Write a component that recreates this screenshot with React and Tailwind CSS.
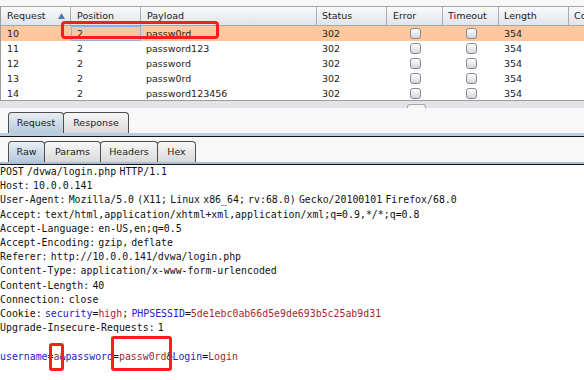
import React from "react";

const rows = [
  { req: "10", pos: "2", payload: "passw0rd", sel: true },
  { req: "11", pos: "2", payload: "password123" },
  { req: "12", pos: "2", payload: "password" },
  { req: "13", pos: "2", payload: "passw0rd" },
  { req: "14", pos: "2", payload: "password123456" },
];

const cols = "grid grid-cols-[70px_70px_176px_70px_56px_56px_70px_1fr]";

const Check = () => (
  <div className="w-[11px] h-[11px] rounded-[3px] border border-[#858990] bg-linear-to-b from-white to-[#d3d6dc]" />
);

const Tab = ({ label, active, w }) => (
  <div
    className={
      "h-[21px] flex items-center justify-center rounded-t-[4px] border border-b-0 border-[#4e4e4e] -ml-px first:ml-0 " +
      w +
      (active
        ? " bg-linear-to-b from-[#e9eff5] to-[#b5c9dc] relative z-10"
        : " bg-linear-to-b from-[#f7f7f7] to-[#d9d9d9]")
    }
  >
    <span className="text-[9.5px] text-[#1c1c1c]">{label}</span>
  </div>
);

const B = ({ children }) => <span className="text-[#2222c4]">{children}</span>;
const R = ({ children }) => <span className="text-[#a8262c]">{children}</span>;

export default function App() {
  return (
    <div className="relative w-[584px] h-[380px] overflow-hidden bg-white font-['DejaVu_Sans',sans-serif] text-[#1c1c1c]">
      {/* results table */}
      <div className="h-[6px] bg-[#f8f8f8]" />
      <div className="border-l border-b border-[#9c9c9c]">
        <div className={cols + " h-[20px] border-t border-b border-[#a3a6ad] bg-linear-to-b from-[#f8f9fb] to-[#e1e4e9] text-[9.5px]"}>
          <div className="flex items-center justify-between pl-[6px] pr-[5px] border-r border-[#a9acb4]">
            <span>Request</span>
            <svg width="7" height="6" viewBox="0 0 7 6">
              <path d="M3.5 0 L7 6 L0 6 Z" fill="#4b7ab3" />
            </svg>
          </div>
          <div className="flex items-center pl-[6px] border-r border-[#a9acb4]">Position</div>
          <div className="flex items-center pl-[6px] border-r border-[#a9acb4]">Payload</div>
          <div className="flex items-center pl-[5px] border-r border-[#a9acb4]">Status</div>
          <div className="flex items-center pl-[6px] border-r border-[#a9acb4]">Error</div>
          <div className="flex items-center pl-[5px] border-r border-[#a9acb4]">Timeout</div>
          <div className="flex items-center pl-[5px] border-r border-[#a9acb4]">Length</div>
          <div className="flex items-center pl-[5px] whitespace-nowrap overflow-hidden">Co</div>
        </div>
        <div className="h-[74px] overflow-hidden text-[9.5px]">
          {rows.map((r) => (
            <div key={r.req} className={cols + " h-[15px] leading-[15px] " + (r.sel ? "bg-[#ffc79d]" : "bg-white")}>
              <div className="pl-[6px]">{r.req}</div>
              <div className={r.sel ? "pl-[5px] border border-[#8db2da] leading-[13px]" : "pl-[6px]"}>{r.pos}</div>
              <div className="pl-[5px]">{r.payload}</div>
              <div className="pl-[5px]">302</div>
              <div className="flex items-center justify-center"><Check /></div>
              <div className="flex items-center justify-center"><Check /></div>
              <div className="pl-[5px]">354</div>
              <div />
            </div>
          ))}
        </div>
      </div>
      <div className="h-[7px] bg-[#e3e4e8] flex justify-start">
        <div className="ml-[407px] mt-[3px] w-[19px] h-[4px] rounded-t-[3px] border border-b-0 border-[#a4a7ad] bg-[#f3f4f6]" />
      </div>

      {/* request / response tabs */}
      <div className="bg-[#f8f8f8] pt-[4px] pl-[8px] flex">
        <Tab label="Request" active w="w-[56px]" />
        <Tab label="Response" w="w-[66px]" />
      </div>
      <div className="h-[3px] bg-[#b8cde2]" />
      <div className="h-px bg-[#141414]" />

      {/* raw / params tabs */}
      <div className="bg-[#f8f8f8] pt-[4px] pl-[8px] flex">
        <Tab label="Raw" active w="w-[37px]" />
        <Tab label="Params" w="w-[57px]" />
        <Tab label="Headers" w="w-[58px]" />
        <Tab label="Hex" w="w-[39px]" />
      </div>
      <div className="h-[2px] bg-[#a9bed3]" />
      <div className="h-px bg-[#141414]" />

      {/* raw request */}
      <div className="font-['DejaVu_Sans_Mono',monospace] text-[9.9px] leading-[14.2px] [word-spacing:-2.7px] text-[#111] whitespace-pre">
        <div>POST /dvwa/login.php HTTP/1.1</div>
        <div>Host: 10.0.0.141</div>
        <div>User-Agent: Mozilla/5.0 (X11; Linux x86_64; rv:68.0) Gecko/20100101 Firefox/68.0</div>
        <div>Accept: text/html,application/xhtml+xml,application/xml;q=0.9,*/*;q=0.8</div>
        <div>Accept-Language: en-US,en;q=0.5</div>
        <div>Accept-Encoding: gzip, deflate</div>
        <div>Referer: http://10.0.0.141/dvwa/login.php</div>
        <div>Content-Type: application/x-www-form-urlencoded</div>
        <div>Content-Length: 40</div>
        <div>Connection: close</div>
        <div>
          Cookie: <B>security</B>=<R>high</R>; <B>PHPSESSID</B>=<R>5de1ebc0ab66d5e9de693b5c25ab9d31</R>
        </div>
        <div>Upgrade-Insecure-Requests: 1</div>
        <div>&nbsp;</div>
        <div>
          <B>username</B>=<R>a</R>&amp;<B>password</B>=<R>passw0rd</R>&amp;<B>Login</B>=<R>Login</R>
        </div>
      </div>

      {/* red annotation boxes */}
      <div className="absolute left-[61px] top-[21px] w-[158px] h-[18px] border-[3px] border-[#ff1c1c] rounded-[4px]" />
      <div className="absolute left-[49px] top-[343px] w-[15px] h-[28px] border-[3px] border-[#ff1c1c] rounded-[3px]" />
      <div className="absolute left-[111px] top-[336px] w-[61px] h-[35px] border-[3px] border-[#ff1c1c] rounded-[3px]" />
    </div>
  );
}
